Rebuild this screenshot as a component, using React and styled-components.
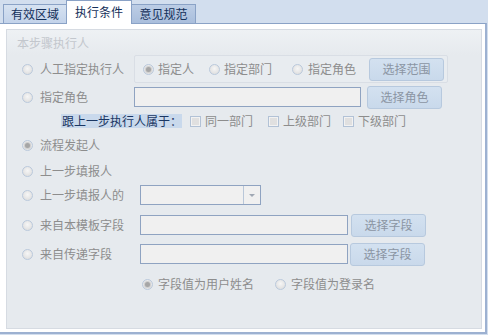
import React from 'react';
import styled, { createGlobalStyle } from 'styled-components';

const Global = createGlobalStyle`
  html, body { margin: 0; padding: 0; }
  body {
    background: #d2deee;
    font-family: "Noto Sans CJK SC", "Noto Sans", sans-serif;
    font-size: 12px;
  }
  * { box-sizing: border-box; }
`;

const Frame = styled.div`
  width: 488px;
  height: 335px;
  display: flex;
  flex-direction: column;
  background: #d2deee;
  overflow: hidden;
`;

const TabStrip = styled.div`
  height: 23px;
  display: flex;
  align-items: flex-end;
  padding-left: 3px;
`;

const Tab = styled.div`
  width: ${p => p.$w}px;
  height: ${p => (p.$active ? 24 : 19)}px;
  margin-left: ${p => (p.$first ? 0 : -1)}px;
  margin-bottom: ${p => (p.$active ? -1 : 0)}px;
  position: relative;
  z-index: ${p => (p.$active ? 2 : 1)};
  border: 1px solid #8aa2c6;
  border-bottom: none;
  background: ${p =>
    p.$active
      ? '#ffffff'
      : p.$dark
      ? 'linear-gradient(#bccde5, #a9bedc)'
      : 'linear-gradient(#d6e2f1, #c3d3ea)'};
  color: #14305a;
  display: flex;
  align-items: center;
  justify-content: center;
  font-size: 12px;
  line-height: 1;
  padding-bottom: ${p => (p.$active ? 2 : 0)}px;
`;

const Panel = styled.div`
  width: 487px;
  height: 311px;
  background: #ffffff;
  border-top: 1px solid #8aa2c6;
  border-right: 2px solid #9db1d1;
  border-bottom: 2px solid #9db1d1;
  padding: 5px 0 0 6px;
`;

const Fieldset = styled.div`
  width: 476px;
  height: 300px;
  border: 1px solid #d6dbe2;
  background: #e6eaee;
  display: flex;
  flex-direction: column;
`;

const Legend = styled.div`
  height: 25px;
  display: flex;
  align-items: center;
  padding-left: 10px;
  color: #c3c7cd;
  background: linear-gradient(#eef1f4, #e6eaee);
`;

const Row = styled.div`
  height: ${p => p.$h}px;
  display: flex;
  align-items: center;
  padding-left: ${p => (p.$pl ?? 15)}px;
  color: #8d8d8d;
`;

const RadioOption = styled.div`
  display: flex;
  align-items: center;
  gap: ${p => p.$gap ?? 7}px;
  width: ${p => (p.$w ? `${p.$w}px` : 'auto')};
  margin-left: ${p => p.$ml ?? 0}px;
  flex-shrink: 0;
  white-space: nowrap;
  line-height: 1;
`;

const Radio = styled.span`
  width: 11px;
  height: 11px;
  border-radius: 50%;
  border: 1px solid #bac9dc;
  background: radial-gradient(circle at 50% 40%, #f6f6f6 0%, #e2e2e2 70%, #d6d6d6 100%);
  display: flex;
  align-items: center;
  justify-content: center;
  flex-shrink: 0;
  &::after {
    content: '';
    width: 5px;
    height: 5px;
    border-radius: 50%;
    background: ${p => (p.$checked ? '#a6a6a6' : 'transparent')};
    box-shadow: ${p => (p.$checked ? '0 0 0 1px #cfcfcf' : 'none')};
  }
`;

const CheckOption = styled.div`
  display: flex;
  align-items: center;
  gap: 4px;
  margin-left: ${p => p.$ml ?? 0}px;
  white-space: nowrap;
  line-height: 1;
`;

const CheckBox = styled.span`
  width: 11px;
  height: 11px;
  border: 1px solid #b2c2d6;
  background: #e0e0e0;
  box-shadow: inset 0 0 0 1px #f2f2f2;
  flex-shrink: 0;
`;

const Highlight = styled.span`
  height: 14px;
  display: flex;
  align-items: center;
  padding-left: 1px;
  background: #c9d9ec;
  color: #1b3763;
  white-space: nowrap;
  line-height: 1;
`;

const GroupBox = styled.div`
  width: 314px;
  height: 28px;
  border: 1px solid #d9dee5;
  border-radius: 2px;
  background: #e8ecf0;
  display: flex;
  align-items: center;
  padding-left: 8px;
`;

const TextInput = styled.div`
  width: ${p => p.$w}px;
  height: 20px;
  border: 1px solid #8fa3c1;
  background: #f0f0f0;
  flex-shrink: 0;
`;

const Select = styled.div`
  width: 121px;
  height: 20px;
  border: 1px solid #8fa3c1;
  background: #f0f0f0;
  display: flex;
  justify-content: flex-end;
`;

const DropButton = styled.div`
  width: 17px;
  height: 100%;
  border-left: 1px solid #b9c7d9;
  display: flex;
  align-items: center;
  justify-content: center;
  &::after {
    content: '';
    border-left: 3px solid transparent;
    border-right: 3px solid transparent;
    border-top: 3px solid #a0a8b4;
  }
`;

const Button = styled.div`
  width: 75px;
  height: 23px;
  margin-left: ${p => p.$ml ?? 0}px;
  border: 1px solid #b7c9de;
  border-radius: 3px;
  background: linear-gradient(#d3e1f0, #c9d9eb);
  color: #8b95a3;
  display: flex;
  align-items: center;
  justify-content: center;
  line-height: 1;
  flex-shrink: 0;
`;

const Opt = ({ checked, children, w, gap, ml }) => (
  <RadioOption $w={w} $gap={gap} $ml={ml}>
    <Radio $checked={checked} />
    <span>{children}</span>
  </RadioOption>
);

const Check = ({ children, ml }) => (
  <CheckOption $ml={ml}>
    <CheckBox />
    <span>{children}</span>
  </CheckOption>
);

export default function App() {
  return (
    <Frame>
      <Global />
      <TabStrip>
        <Tab $first $w={64}>有效区域</Tab>
        <Tab $active $w={66}>执行条件</Tab>
        <Tab $dark $w={65}>意见规范</Tab>
      </TabStrip>
      <Panel>
        <Fieldset>
          <Legend>本步骤执行人</Legend>

          <Row $h={28}>
            <Opt w={112}>人工指定执行人</Opt>
            <GroupBox>
              <Opt checked gap={4}>指定人</Opt>
              <Opt gap={4} ml={15}>指定部门</Opt>
              <Opt gap={5} ml={20}>指定角色</Opt>
              <Button $ml={13}>选择范围</Button>
            </GroupBox>
          </Row>

          <Row $h={28}>
            <Opt w={112}>指定角色</Opt>
            <TextInput $w={227} />
            <Button $ml={6}>选择角色</Button>
          </Row>

          <Row $h={20} $pl={54}>
            <Highlight>跟上一步执行人属于：</Highlight>
            <Check ml={8}>同一部门</Check>
            <Check ml={15}>上级部门</Check>
            <Check ml={12}>下级部门</Check>
          </Row>

          <Row $h={28}>
            <Opt checked>流程发起人</Opt>
          </Row>

          <Row $h={24}>
            <Opt>上一步填报人</Opt>
          </Row>

          <Row $h={24}>
            <Opt w={118}>上一步填报人的</Opt>
            <Select>
              <DropButton />
            </Select>
          </Row>

          <Row $h={36}>
            <Opt w={118}>来自本模板字段</Opt>
            <TextInput $w={208} />
            <Button $ml={3}>选择字段</Button>
          </Row>

          <Row $h={22}>
            <Opt w={118}>来自传递字段</Opt>
            <TextInput $w={208} />
            <Button $ml={2}>选择字段</Button>
          </Row>

          <Row $h={38} $pl={135}>
            <Opt checked gap={5}>字段值为用户姓名</Opt>
            <Opt gap={5} ml={21}>字段值为登录名</Opt>
          </Row>
        </Fieldset>
      </Panel>
    </Frame>
  );
}
